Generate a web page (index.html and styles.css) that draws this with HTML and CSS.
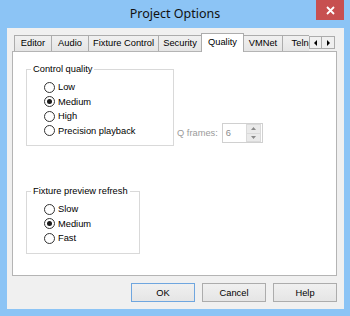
FILE: index.html
```html
<!DOCTYPE html>
<html lang="en">
<head>
    <meta charset="UTF-8">
    <meta name="viewport" content="width=device-width, initial-scale=1.0">
    <title>Project Options</title>
    <link rel="stylesheet" href="styles.css">
</head>
<body>
    <div class="window">
        <div class="titlebar">
            <span></span>
            <span class="title">Project Options</span>
            <span class="close">
                <svg width="9" height="9" viewBox="0 0 9 9"><path d="M1 1 L8 8 M8 1 L1 8" stroke="#fff" stroke-width="1.8"/></svg>
            </span>
        </div>
        <div class="client">
            <div class="tabstrip">
                <div class="tabs">
                    <div class="tab" style="width:38px">Editor</div>
                    <div class="tab" style="width:38px">Audio</div>
                    <div class="tab" style="width:71px">Fixture Control</div>
                    <div class="tab" style="width:44px">Security</div>
                    <div class="tab active" style="width:43px">Quality</div>
                    <div class="tab" style="width:40px">VMNet</div>
                    <div class="tab" style="width:44px">Telnet</div>
                </div>
                <div class="tab-arrows">
                    <span class="arrow">
                        <svg width="4" height="6" viewBox="0 0 4 6"><path d="M3 0 L0 3 L3 6 Z" fill="#000"/></svg>
                    </span>
                    <span class="arrow">
                        <svg width="4" height="6" viewBox="0 0 4 6"><path d="M1 0 L4 3 L1 6 Z" fill="#000"/></svg>
                    </span>
                </div>
            </div>
            <div class="panel">
                <div class="panel-row">
                    <fieldset class="group group-quality">
                        <legend>Control quality</legend>
                        <div class="options">
                            <div class="option"><span class="radio"></span>Low</div>
                            <div class="option"><span class="radio checked"></span>Medium</div>
                            <div class="option"><span class="radio"></span>High</div>
                            <div class="option"><span class="radio"></span>Precision playback</div>
                        </div>
                    </fieldset>
                    <div class="qframes">
                        <span class="qlabel">Q frames:</span>
                        <div class="spinbox">
                            <span class="spin-value">6</span>
                            <div class="spin-buttons">
                                <span class="spin-btn">
                                    <svg width="5" height="3" viewBox="0 0 5 3"><path d="M0 3 L2.5 0 L5 3 Z" fill="#8a8a8a"/></svg>
                                </span>
                                <span class="spin-btn">
                                    <svg width="5" height="3" viewBox="0 0 5 3"><path d="M0 0 L2.5 3 L5 0 Z" fill="#8a8a8a"/></svg>
                                </span>
                            </div>
                        </div>
                    </div>
                </div>
                <fieldset class="group group-refresh">
                    <legend>Fixture preview refresh</legend>
                    <div class="options">
                        <div class="option"><span class="radio"></span>Slow</div>
                        <div class="option"><span class="radio checked"></span>Medium</div>
                        <div class="option"><span class="radio"></span>Fast</div>
                    </div>
                </fieldset>
            </div>
            <div class="buttons">
                <button class="button default">OK</button>
                <button class="button">Cancel</button>
                <button class="button">Help</button>
            </div>
        </div>
    </div>
</body>
</html>
```

FILE: styles.css
```css
body {
    margin: 0;
    background: #8cc4f5;
    font-family: 'Liberation Sans', Arial, sans-serif;
    font-size: 9.3px;
    color: #000;
}

.window {
    width: 350px;
    height: 316px;
    display: flex;
    flex-direction: column;
}

.titlebar {
    height: 28px;
    display: grid;
    grid-template-columns: 1fr auto 1fr;
}

.title {
    font-family: 'Noto Sans', 'Open Sans', sans-serif;
    font-size: 12.5px;
    line-height: 28px;
    color: #111;
}

.close {
    justify-self: end;
    width: 28px;
    height: 20px;
    margin-right: 6px;
    background: #c75050;
    display: flex;
    align-items: center;
    justify-content: center;
}

.client {
    height: 281px;
    margin: 0 6px 7px 7px;
    padding: 5px 7px 7px 5px;
    box-sizing: border-box;
    background: #f0f0f0;
    display: flex;
    flex-direction: column;
}

/* tabs */
.tabstrip {
    height: 19px;
    margin-bottom: -1px;
    display: flex;
    padding-left: 2px;
}

.tabs {
    flex: 1;
    display: flex;
    overflow: hidden;
    height: 19px;
}

.tab {
    height: 16px;
    margin-top: 2px;
    margin-left: -1px;
    box-sizing: border-box;
    border: 1px solid #acacac;
    border-bottom: none;
    background: linear-gradient(#f0f0f0, #e5e5e5);
    text-align: center;
    line-height: 15px;
    white-space: nowrap;
    overflow: hidden;
    flex-shrink: 0;
}

.tab:first-child {
    margin-left: 0;
}

.tab.active {
    height: 19px;
    margin-top: 0;
    background: #fff;
    position: relative;
    z-index: 1;
    line-height: 17px;
}

.tab-arrows {
    display: flex;
    margin: 3px 2px 0 0;
    height: 13px;
}

.arrow {
    width: 13px;
    height: 13px;
    box-sizing: border-box;
    border: 1px solid #acacac;
    background: #f0f0f0;
    display: flex;
    align-items: center;
    justify-content: center;
}

.arrow + .arrow {
    border-left: none;
}

/* panel */
.panel {
    height: 225px;
    box-sizing: border-box;
    border: 1px solid #b4b4b4;
    background: #fff;
    padding: 11px 0 0 13px;
}

.panel-row {
    display: flex;
    align-items: flex-end;
}

.group {
    margin: 0;
    padding: 0;
    min-width: 0;
    border: 1px solid #d9d9d9;
}

.group legend {
    padding: 0 2px;
    margin-left: 4px;
    line-height: 12px;
}

.group-quality {
    width: 148px;
    box-sizing: border-box;
}

.group-refresh {
    width: 114px;
    box-sizing: border-box;
    margin-top: 39px;
}

.options {
    padding: 5px 0 7px 17px;
}

.option {
    height: 14.5px;
    display: flex;
    align-items: center;
    white-space: nowrap;
}

.radio {
    width: 11px;
    height: 11px;
    box-sizing: border-box;
    border: 1px solid #333;
    border-radius: 50%;
    background: #fff;
    margin-right: 3px;
    display: flex;
    align-items: center;
    justify-content: center;
}

.radio.checked::after {
    content: '';
    width: 5px;
    height: 5px;
    border-radius: 50%;
    background: #1a1a1a;
}

/* q frames */
.qframes {
    display: flex;
    align-items: center;
    margin: 0 0 3px 3px;
}

.qlabel {
    color: #9a9a9a;
    margin-right: 4px;
}

.spinbox {
    width: 41px;
    height: 20px;
    box-sizing: border-box;
    border: 1px solid #d0d0d0;
    background: #fff;
    display: flex;
}

.spin-value {
    flex: 1;
    color: #8a8a8a;
    padding-left: 3px;
    line-height: 18px;
}

.spin-buttons {
    width: 15px;
    display: flex;
    flex-direction: column;
    margin-right: 1px;
}

.spin-btn {
    flex: 1;
    background: #eaeaea;
    border: 1px solid #dadada;
    display: flex;
    align-items: center;
    justify-content: center;
}

.spin-btn + .spin-btn {
    border-top: none;
}

/* bottom buttons */
.buttons {
    display: flex;
    justify-content: flex-end;
    gap: 7px;
    margin-top: 7px;
}

.button {
    width: 64px;
    height: 19px;
    padding: 0;
    font-family: inherit;
    font-size: 9.3px;
    color: #000;
    border: 1px solid #acacac;
    background: linear-gradient(#f0f0f0, #e5e5e5);
    border-radius: 0;
}

.button.default {
    border-color: #6fa6df;
}
```
